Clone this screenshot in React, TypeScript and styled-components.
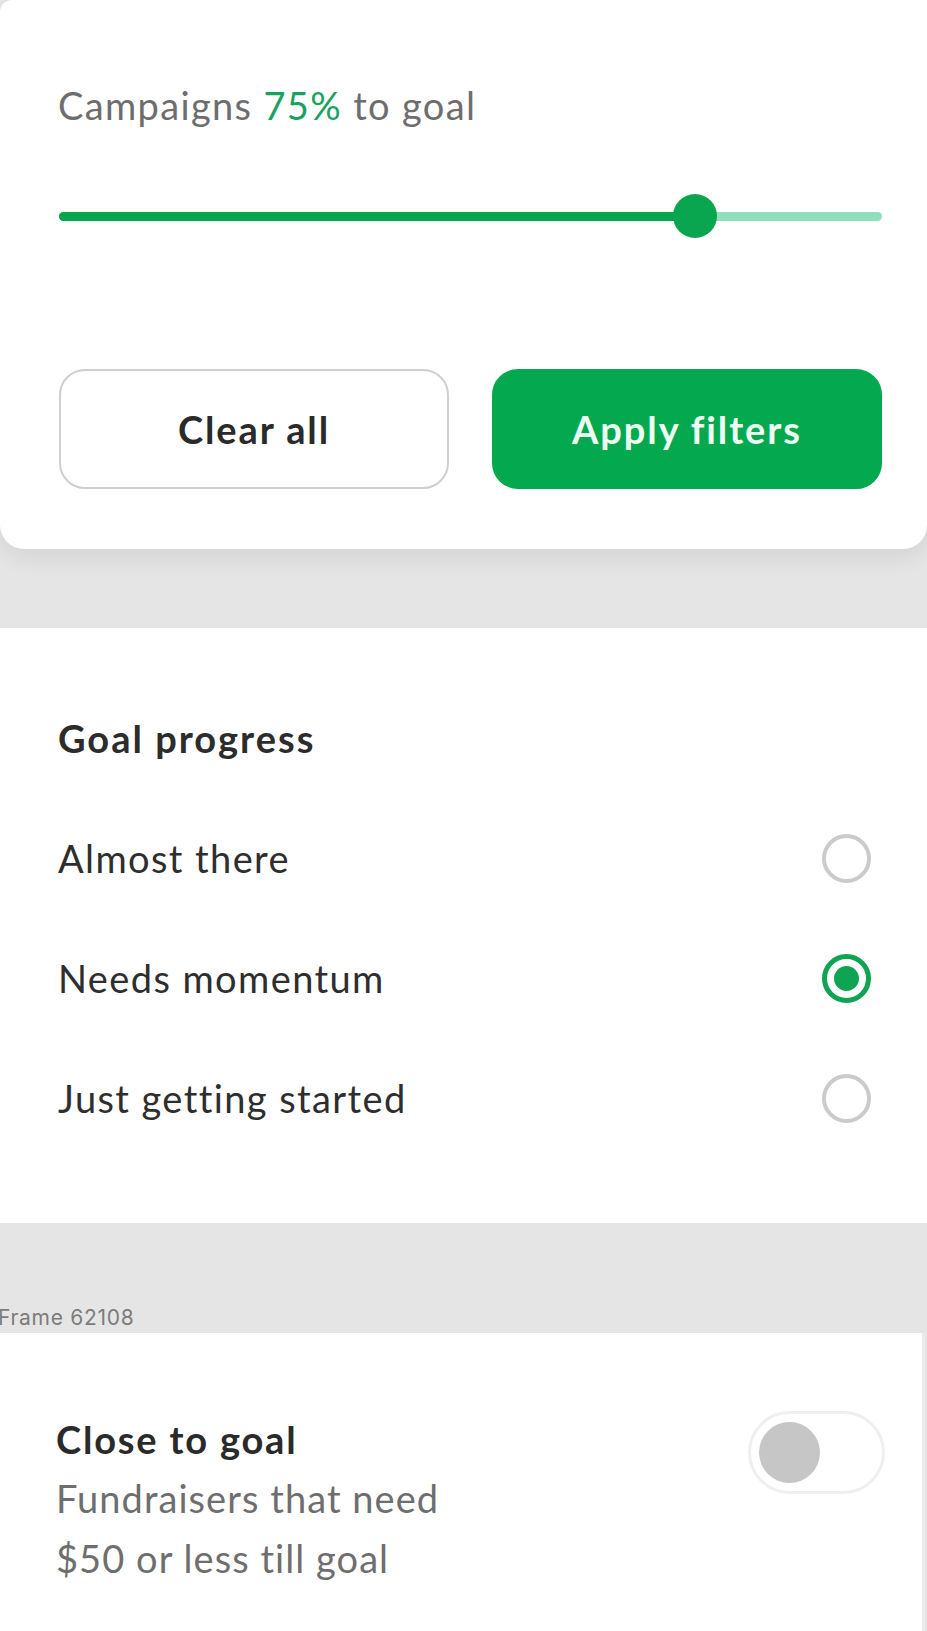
import React, { useState } from "react";
import styled, { createGlobalStyle, css } from "styled-components";

const GlobalStyle = createGlobalStyle`
  html, body {
    margin: 0;
    padding: 0;
    background: #e5e5e5;
    font-family: "Lato", "Liberation Sans", sans-serif;
    -webkit-font-smoothing: antialiased;
  }
  * { box-sizing: border-box; }
`;

const Page = styled.div`
  width: 927px;
  min-height: 1631px;
  background: #e5e5e5;
  display: flex;
  flex-direction: column;
`;

const FilterCard = styled.section`
  background: #fff;
  border-radius: 12px 0 24px 24px;
  box-shadow: 0 10px 22px rgba(0, 0, 0, 0.07);
  padding: 83px 45px 60px 58px;
  position: relative;
  z-index: 1;
`;

const RangeLabel = styled.div`
  font-size: 38px;
  line-height: 44px;
  letter-spacing: 1.35px;
  color: #6d6d6d;
`;

const Accent = styled.span`
  color: #17a25f;
`;

const SliderWrap = styled.div`
  position: relative;
  height: 44px;
  margin: 67px 0 0 1px;
  display: flex;
  align-items: center;
`;

const Track = styled.div`
  flex: 1;
  height: 9px;
  border-radius: 5px;
  background: #8fdfbb;
  overflow: hidden;
`;

const TrackFill = styled.div`
  height: 100%;
  background: #08a54f;
`;

const Thumb = styled.div`
  position: absolute;
  top: 0;
  width: 44px;
  height: 44px;
  margin-left: -22px;
  border-radius: 50%;
  background: #0aa64f;
`;

const ButtonRow = styled.div`
  display: grid;
  grid-template-columns: 1fr 1fr;
  gap: 43px;
  margin: 131px 0 0 1px;
`;

const Button = styled.button<{ $primary?: boolean }>`
  height: 120px;
  border-radius: 26px;
  font-family: "Lato", "Liberation Sans", sans-serif;
  font-size: 38px;
  letter-spacing: 1.9px;
  font-weight: 700;
  cursor: pointer;
  ${({ $primary }) =>
    $primary
      ? css`
          background: #04a94f;
          border: 2px solid #04a94f;
          color: #ecfff2;
        `
      : css`
          background: #fff;
          border: 2px solid #cfcfcf;
          color: #2a2a2a;
        `}
`;

const Section = styled.section`
  background: #fff;
  margin-top: 79px;
  padding: 88px 56px 65px 58px;
`;

const SectionTitle = styled.h3`
  margin: 0 0 38px;
  font-size: 38px;
  line-height: 44px;
  letter-spacing: 2px;
  font-weight: 700;
  color: #2c2c2c;
`;

const OptionRow = styled.label`
  height: 120px;
  display: flex;
  align-items: center;
  justify-content: space-between;
  font-size: 38px;
  letter-spacing: 1.4px;
  color: #2e2e2e;
  cursor: pointer;
`;

const Radio = styled.span<{ $checked: boolean }>`
  width: 49px;
  height: 49px;
  border-radius: 50%;
  display: flex;
  align-items: center;
  justify-content: center;
  border: ${({ $checked }) => ($checked ? "5px solid #0fa452" : "4px solid #cbcbcb")};

  &::after {
    content: "";
    width: 25px;
    height: 25px;
    border-radius: 50%;
    background: #0fa452;
    display: ${({ $checked }) => ($checked ? "block" : "none")};
  }
`;

const FrameBand = styled.div`
  height: 110px;
  display: flex;
  align-items: flex-end;
  padding-bottom: 3px;
`;

const FrameLabel = styled.span`
  margin-left: -2px;
  font-family: "Inter", "Liberation Sans", sans-serif;
  font-size: 21px;
  line-height: 24px;
  letter-spacing: 0.7px;
  color: #7c7c7c;
`;

const ToggleSection = styled.section`
  flex: 1;
  width: 925px;
  background: #fff;
  border-right: 3px solid #ececec;
  padding: 78px 37px 40px 56px;
  display: flex;
  justify-content: space-between;
  align-items: flex-start;
`;

const ToggleText = styled.div`
  margin-top: 6px;
`;

const ToggleTitle = styled.div`
  font-size: 38px;
  line-height: 44px;
  letter-spacing: 1.8px;
  font-weight: 700;
  color: #2a2a2a;
`;

const ToggleDesc = styled.div`
  margin-top: 7px;
  font-size: 38px;
  line-height: 60px;
  letter-spacing: 1.05px;
  color: #6e6e6e;
`;

const Switch = styled.button<{ $on: boolean }>`
  width: 137px;
  height: 83px;
  padding: 0 8px;
  border-radius: 42px;
  border: 3px solid #efefef;
  background: ${({ $on }) => ($on ? "#04a94f" : "#fff")};
  display: flex;
  align-items: center;
  justify-content: ${({ $on }) => ($on ? "flex-end" : "flex-start")};
  cursor: pointer;
`;

const Knob = styled.span<{ $on: boolean }>`
  width: 61px;
  height: 61px;
  border-radius: 50%;
  background: ${({ $on }) => ($on ? "#fff" : "#c6c6c6")};
`;

const options = ["Almost there", "Needs momentum", "Just getting started"];

// thumb sits a bit past the 75% mark on the track, as in the design
const thumbPos = 77.3;

export default function App() {
  const [selected, setSelected] = useState("Needs momentum");
  const [closeToGoal, setCloseToGoal] = useState(false);

  return (
    <>
      <GlobalStyle />
      <Page>
        <FilterCard>
          <RangeLabel>
            Campaigns <Accent>75%</Accent> to goal
          </RangeLabel>
          <SliderWrap>
            <Track>
              <TrackFill style={{ width: `${thumbPos}%` }} />
            </Track>
            <Thumb style={{ left: `${thumbPos}%` }} />
          </SliderWrap>
          <ButtonRow>
            <Button>Clear all</Button>
            <Button $primary>Apply filters</Button>
          </ButtonRow>
        </FilterCard>

        <Section>
          <SectionTitle>Goal progress</SectionTitle>
          {options.map((o) => (
            <OptionRow key={o} onClick={() => setSelected(o)}>
              {o}
              <Radio $checked={selected === o} />
            </OptionRow>
          ))}
        </Section>

        <FrameBand>
          <FrameLabel>Frame 62108</FrameLabel>
        </FrameBand>

        <ToggleSection>
          <ToggleText>
            <ToggleTitle>Close to goal</ToggleTitle>
            <ToggleDesc>
              Fundraisers that need
              <br />
              $50 or less till goal
            </ToggleDesc>
          </ToggleText>
          <Switch $on={closeToGoal} onClick={() => setCloseToGoal(!closeToGoal)}>
            <Knob $on={closeToGoal} />
          </Switch>
        </ToggleSection>
      </Page>
    </>
  );
}
